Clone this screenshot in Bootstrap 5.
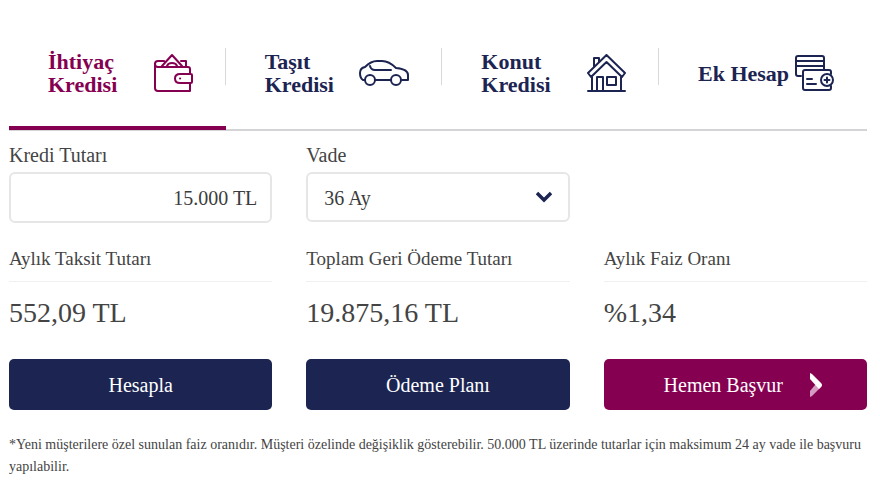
<!DOCTYPE html>
<html lang="tr">
<head>
<meta charset="utf-8">
<meta name="viewport" content="width=device-width, initial-scale=1">
<title>Kredi Hesaplama</title>
<link href="https://cdn.jsdelivr.net/npm/bootstrap@5.3.0/dist/css/bootstrap.min.css" rel="stylesheet">
<style>
:root { --navy: #1c2452; --plum: #860051; }
body { font-family: "Liberation Serif", "Times New Roman", serif; color: #444; background: #fff; }
.calc { padding: 36px 13px 16px 9px; }
.loan-tabs { display: grid; grid-template-columns: 25fr 25fr 25fr 24fr; border-bottom: 2px solid #d4d3d5; }
.loan-tab { position: relative; height: 94px; padding: 0 33px 20px 39px; margin-bottom: -1px; color: var(--navy); font-size: 22px; font-weight: 700; line-height: 23px; text-decoration: none; }
.loan-tab:not(:last-child)::after { content: ""; position: absolute; right: 0; top: 12px; width: 1px; height: 37px; background: #d9d9dc; }
.loan-tab.active { color: var(--plum); border-bottom: 4px solid var(--plum); padding-bottom: 16px; }
.loan-tab svg { fill: none; stroke: currentColor; stroke-width: 2; stroke-linejoin: round; stroke-linecap: round; flex: none; }
.fields { --bs-gutter-x: 34px; }
.field-label { font-size: 20px; line-height: 24px; margin-bottom: 5px; }
.field-box { font-size: 20px; line-height: 24px; height: 51px; color: #3c3c3c; border: 2px solid #e6e6e7; border-radius: 6px; padding: 6px 13px 4px; }
.field-pick { height: 50px; padding-left: 16px; background-position: right 16px center; background-size: 16px 12px;
  background-image: url("data:image/svg+xml,%3Csvg xmlns='http://www.w3.org/2000/svg' viewBox='0 0 16 12'%3E%3Cpath d='M1 2l7 7 7-7' fill='none' stroke='%231c2452' stroke-width='3.4'/%3E%3C/svg%3E"); }
.result-name { font-size: 19px; line-height: 24px; padding-bottom: 10px; border-bottom: 1px solid #f0f0f1; white-space: nowrap; }
.result-sum { font-size: 28px; line-height: 36px; margin: 13px 0 28px; }
.action { height: 51px; font-size: 20px; line-height: 24px; color: #fff; border: 0; border-radius: 5px; background: var(--navy); }
.action:hover { color: #fff; background: #2a3470; }
.action-apply, .action-apply:hover { background: var(--plum); }
.note { font-size: 14px; line-height: 22px; margin: 24px 0 0; }
</style>
</head>
<body>
<main class="calc">
  <nav class="loan-tabs" aria-label="Kredi türleri">
    <a href="#" class="loan-tab active d-flex align-items-center justify-content-between" aria-current="page">
      <span>İhtiyaç<br>Kredisi</span>
      <svg width="39" height="40" viewBox="0 0 39 40" aria-hidden="true"><path d="M36 21V16Q36 14 34 14H4Q1 14 1 11T4 8H10M1 10V35Q1 38 4 38H36V30M27 8H32V14M8 13L18 2L28 13M13 13Q14 10 18 10T23 13M37 21H26Q21 21 21 25.500T26 30H37Q38 30 38 29V22Q38 21 37 21Z"/><path d="M26 25.500h.1"/></svg>
    </a>
    <a href="#" class="loan-tab d-flex align-items-center justify-content-between">
      <span>Taşıt<br>Kredisi</span>
      <svg width="50" height="28" viewBox="0 0 50 28" aria-hidden="true"><path d="M6 21H4Q1 19 1 14Q1 9 6 8Q12 2 18 2H23Q30 2 37 9Q49 10 49 16V21H43M16 21H32M11 7Q12 11 16 11H32"/><circle cx="11" cy="21" r="5"/><circle cx="37" cy="21" r="5"/></svg>
    </a>
    <a href="#" class="loan-tab d-flex align-items-center justify-content-between">
      <span>Konut<br>Kredisi</span>
      <svg width="39" height="38" viewBox="0 0 39 38" aria-hidden="true"><path d="M1 37H38M5 23V36M34 23V36M7 13V4H12V8M19.500 1L1 19L4 23L19.500 8L35 23L38 19ZM10 36V23H16V36M20 23H29V31H20Z"/></svg>
    </a>
    <a href="#" class="loan-tab d-flex align-items-center justify-content-between">
      <span>Ek Hesap</span>
      <svg width="39" height="36" viewBox="0 0 39 36" aria-hidden="true"><path d="M6 21H3Q1 21 1 19V3Q1 1 3 1H27Q29 1 29 3V14M1 6H29M1 11H29M36 19V17Q36 15 34 15H10Q8 15 8 17V33Q8 35 10 35H34Q36 35 36 33V31M12 24H17M12 29H21"/><circle cx="32" cy="25" r="6"/><path d="M29.500 25H34.500M32 22.500V27.500"/></svg>
    </a>
  </nav>

  <form onsubmit="return false">
    <div class="row fields pt-2 mt-1">
      <div class="col-4">
        <label for="amount" class="field-label d-block">Kredi Tutarı</label>
        <input id="amount" type="text" class="form-control field-box text-end" value="15.000 TL">
      </div>
      <div class="col-4">
        <label for="term" class="field-label d-block">Vade</label>
        <select id="term" class="form-select field-box field-pick"><option>36 Ay</option></select>
      </div>
    </div>
    <div class="row fields pt-4">
      <div class="col-4">
        <div class="result-name">Aylık Taksit Tutarı</div>
        <div class="result-sum">552,09 TL</div>
        <button type="button" class="btn action w-100">Hesapla</button>
      </div>
      <div class="col-4">
        <div class="result-name">Toplam Geri Ödeme Tutarı</div>
        <div class="result-sum">19.875,16 TL</div>
        <button type="button" class="btn action w-100">Ödeme Planı</button>
      </div>
      <div class="col-4">
        <div class="result-name">Aylık Faiz Oranı</div>
        <div class="result-sum">%1,34</div>
        <button type="submit" class="btn action action-apply w-100 d-flex align-items-center justify-content-center">
          <span class="ps-3">Hemen Başvur</span>
          <svg class="ms-4" width="16" height="26" viewBox="0 0 16 26" aria-hidden="true"><path d="M3 25V19L8 13L15 13L14 15L5 24Z" fill="#d49cc0"/><path d="M3 1L5 2L14 11Q16 13 14 15L12 17L3 7Z" fill="#fff"/></svg>
        </button>
      </div>
    </div>
  </form>
  <p class="note">*Yeni müşterilere özel sunulan faiz oranıdır. Müşteri özelinde değişiklik gösterebilir. 50.000 TL üzerinde tutarlar için maksimum 24 ay vade ile başvuru yapılabilir.</p>
</main>
<script src="https://cdn.jsdelivr.net/npm/bootstrap@5.3.0/dist/js/bootstrap.bundle.min.js"></script>
</body>
</html>
